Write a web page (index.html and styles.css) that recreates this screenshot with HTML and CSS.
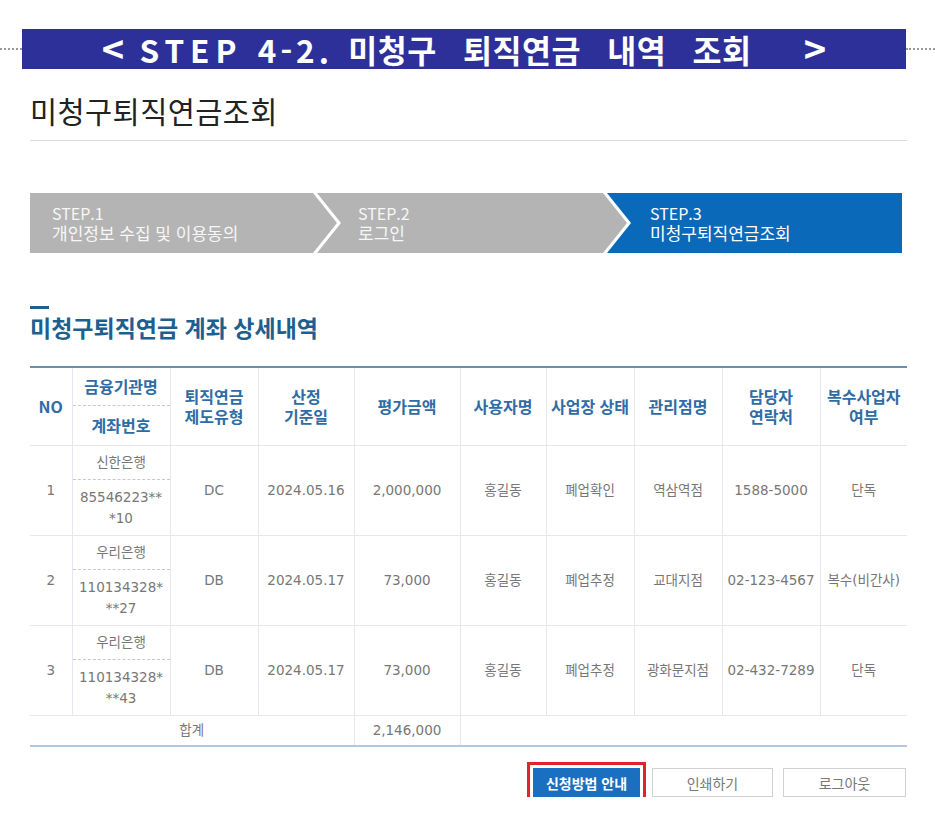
FILE: index.html
```html
<!DOCTYPE html>
<html lang="ko">
<head>
<meta charset="utf-8">
<title>미청구퇴직연금조회</title>
<link rel="stylesheet" href="styles.css">
</head>
<body>
<div class="banner-row">
  <div class="dots dots-left"></div>
  <div class="banner"><span class="lead"><span class="arrow">&lt;</span> <span class="lat">STEP</span> <span class="lat lat-num">4-2.</span> </span>미청구 퇴직연금 내역 조회 <span class="arrow arrow-right">&gt;</span></div>
  <div class="dots"></div>
</div>

<div class="page">
  <h1 class="page-title">미청구퇴직연금조회</h1>

  <div class="steps">
    <div class="step step-first"><span class="step-no">STEP.1</span><span class="step-name">개인정보 수집 및 이용동의</span></div>
    <div class="step step-mid"><span class="step-no">STEP.2</span><span class="step-name">로그인</span></div>
    <div class="step step-last active"><span class="step-no">STEP.3</span><span class="step-name">미청구퇴직연금조회</span></div>
  </div>

  <div class="section-bar"></div>
  <h2 class="section-title">미청구퇴직연금 계좌 상세내역</h2>

  <table class="grid">
    <colgroup>
      <col style="width:42px"><col style="width:98px"><col style="width:88px"><col style="width:96px"><col style="width:106px">
      <col style="width:86px"><col style="width:88px"><col style="width:88px"><col style="width:98px"><col style="width:87px">
    </colgroup>
    <thead>
      <tr class="h1">
        <th rowspan="2" class="first">NO</th>
        <th class="sub-top">금융기관명</th>
        <th rowspan="2">퇴직연금<br>제도유형</th>
        <th rowspan="2">산정<br>기준일</th>
        <th rowspan="2">평가금액</th>
        <th rowspan="2">사용자명</th>
        <th rowspan="2">사업장 상태</th>
        <th rowspan="2">관리점명</th>
        <th rowspan="2">담당자<br>연락처</th>
        <th rowspan="2" class="last">복수사업자<br>여부</th>
      </tr>
      <tr class="h2">
        <th class="sub-bottom">계좌번호</th>
      </tr>
    </thead>
    <tbody>
      <tr class="r-top">
        <td rowspan="2" class="first">1</td>
        <td class="bank">신한은행</td>
        <td rowspan="2">DC</td>
        <td rowspan="2">2024.05.16</td>
        <td rowspan="2">2,000,000</td>
        <td rowspan="2">홍길동</td>
        <td rowspan="2">폐업확인</td>
        <td rowspan="2">역삼역점</td>
        <td rowspan="2">1588-5000</td>
        <td rowspan="2" class="last">단독</td>
      </tr>
      <tr class="r-bottom"><td class="acct">85546223**<br>*10</td></tr>

      <tr class="r-top">
        <td rowspan="2" class="first">2</td>
        <td class="bank">우리은행</td>
        <td rowspan="2">DB</td>
        <td rowspan="2">2024.05.17</td>
        <td rowspan="2">73,000</td>
        <td rowspan="2">홍길동</td>
        <td rowspan="2">폐업추정</td>
        <td rowspan="2">교대지점</td>
        <td rowspan="2">02-123-4567</td>
        <td rowspan="2" class="last">복수(비간사)</td>
      </tr>
      <tr class="r-bottom"><td class="acct">110134328*<br>**27</td></tr>

      <tr class="r-top">
        <td rowspan="2" class="first">3</td>
        <td class="bank">우리은행</td>
        <td rowspan="2">DB</td>
        <td rowspan="2">2024.05.17</td>
        <td rowspan="2">73,000</td>
        <td rowspan="2">홍길동</td>
        <td rowspan="2">폐업추정</td>
        <td rowspan="2">광화문지점</td>
        <td rowspan="2">02-432-7289</td>
        <td rowspan="2" class="last">단독</td>
      </tr>
      <tr class="r-bottom"><td class="acct">110134328*<br>**43</td></tr>

      <tr class="total">
        <td colspan="4" class="first">합계</td>
        <td>2,146,000</td>
        <td colspan="5" class="last"></td>
      </tr>
    </tbody>
  </table>

  <div class="buttons">
    <button class="btn btn-primary">신청방법 안내</button>
    <button class="btn btn-print">인쇄하기</button>
    <button class="btn btn-logout">로그아웃</button>
  </div>
</div>
</body>
</html>
```

FILE: styles.css
```css
* { box-sizing: border-box; }
html, body { margin: 0; padding: 0; background: #fff; }
body {
  font-family: "Noto Sans CJK KR", "Noto Sans", sans-serif;
  color: #333;
}

/* ---------- banner ---------- */
.banner-row {
  display: flex;
  align-items: center;
  margin-top: 29px;
}
.dots {
  flex: 1;
  border-top: 2px dotted #9a9a9a;
  height: 0;
}
.dots-left { flex: 0 0 22px; }
.banner {
  flex: 0 0 884px;
  height: 40px;
  background: #2e309a;
  color: #fff;
  font-weight: 700;
  font-size: 31.5px;
  line-height: 40px;
  text-align: center;
  word-spacing: 17px;
  letter-spacing: 0.5px;
  white-space: nowrap;
}
.banner .lead { word-spacing: 6px; }
.banner .lat { letter-spacing: 6px; }
.banner .lat-num { letter-spacing: 4px; }
.banner .arrow {
  letter-spacing: 0;
  font-size: 38px;
  line-height: 38px;
  vertical-align: top;
}
.banner .arrow-right { margin-left: 26px; }

/* ---------- page ---------- */
.page {
  width: 877px;
  margin-left: 30px;
}
.page-title {
  margin: 21px 0 0;
  padding-bottom: 10px;
  height: 51px;
  font-size: 29.5px;
  line-height: 40px;
  font-weight: 400;
  color: #222;
  letter-spacing: 0.4px;
  border-bottom: 1px solid #dcdcdc;
}

/* ---------- steps ---------- */
.steps {
  display: flex;
  width: 872px;
  height: 60px;
  margin-top: 52px;
}
.step {
  display: flex;
  flex-direction: column;
  justify-content: center;
  height: 60px;
  background: #b4b4b4;
  color: #f7f7f7;
  font-size: 17px;
  line-height: 20px;
}
.step .step-no { font-size: 16px; }
.step-first {
  flex: 0 0 307px;
  padding-left: 22px;
  clip-path: polygon(0 0, calc(100% - 24px) 0, 100% 50%, calc(100% - 24px) 100%, 0 100%);
}
.step-mid {
  flex: 0 0 310px;
  margin-left: -20px;
  padding-left: 41px;
  clip-path: polygon(0 0, calc(100% - 24px) 0, 100% 50%, calc(100% - 24px) 100%, 0 100%, 24px 50%);
}
.step-last {
  flex: 1;
  margin-left: -20px;
  padding-left: 43px;
  clip-path: polygon(0 0, 100% 0, 100% 100%, 0 100%, 24px 50%);
}
.step.active {
  background: #0a69b9;
  color: #fff;
}

/* ---------- section ---------- */
.section-bar {
  width: 19px;
  height: 3px;
  background: #1d5f8f;
  margin-top: 53px;
}
.section-title {
  margin: 3px 0 0;
  font-size: 23px;
  line-height: 30px;
  font-weight: 700;
  color: #1d5f8f;
}

/* ---------- table ---------- */
.grid {
  width: 877px;
  margin-top: 24px;
  border-collapse: collapse;
  table-layout: fixed;
  border-top: 2px solid #6690b4;
  border-bottom: 2px solid #b3c8da;
}
.grid th, .grid td {
  padding: 0 1px;
  text-align: center;
  vertical-align: middle;
  border-left: 1px solid #e2e8ee;
  border-right: 1px solid #e2e8ee;
}
.grid .first { border-left: none; }
.grid .last { border-right: none; }
.grid th {
  color: #2f6ca6;
  font-weight: 700;
  font-size: 16px;
  line-height: 20px;
  border-bottom: 1px solid #e6e6e6;
}
.grid tr.h1 th.sub-top {
  height: 38px;
  border-bottom: 1px dashed #c8c8c8;
}
.grid tr.h2 th.sub-bottom { height: 40px; }

.grid td {
  color: #777;
  font-family: "DejaVu Sans", "Noto Sans CJK KR", sans-serif;
  font-size: 13.5px;
  line-height: 21px;
  border-bottom: 1px solid #e8e8e8;
}
.grid td.bank {
  height: 34px;
  border-bottom: 1px dashed #c8c8c8;
}
.grid td.acct {
  height: 56px;
  padding-top: 2px;
}
.grid tr.total td {
  height: 31px;
  border-bottom: none;
}
.grid tr.total td.last { border-left: 1px solid #e2e8ee; }

/* ---------- buttons ---------- */
.buttons {
  display: flex;
  justify-content: flex-end;
  align-items: center;
  margin-top: 21px;
  margin-right: 1px;
}
.btn {
  height: 29px;
  padding: 0;
  font-family: "Noto Sans CJK KR", sans-serif;
  font-size: 14px;
  background: #fff;
  border: 1px solid #d0d0d0;
  color: #777;
  cursor: pointer;
}
.btn-primary {
  width: 107px;
  background: #1a6fc0;
  border-color: #1a6fc0;
  color: #fff;
  font-weight: 700;
  outline: 3px solid #e1232b;
  outline-offset: 3px;
}
.btn-print {
  width: 121px;
  margin-left: 12px;
}
.btn-logout {
  width: 123px;
  margin-left: 10px;
}
```
